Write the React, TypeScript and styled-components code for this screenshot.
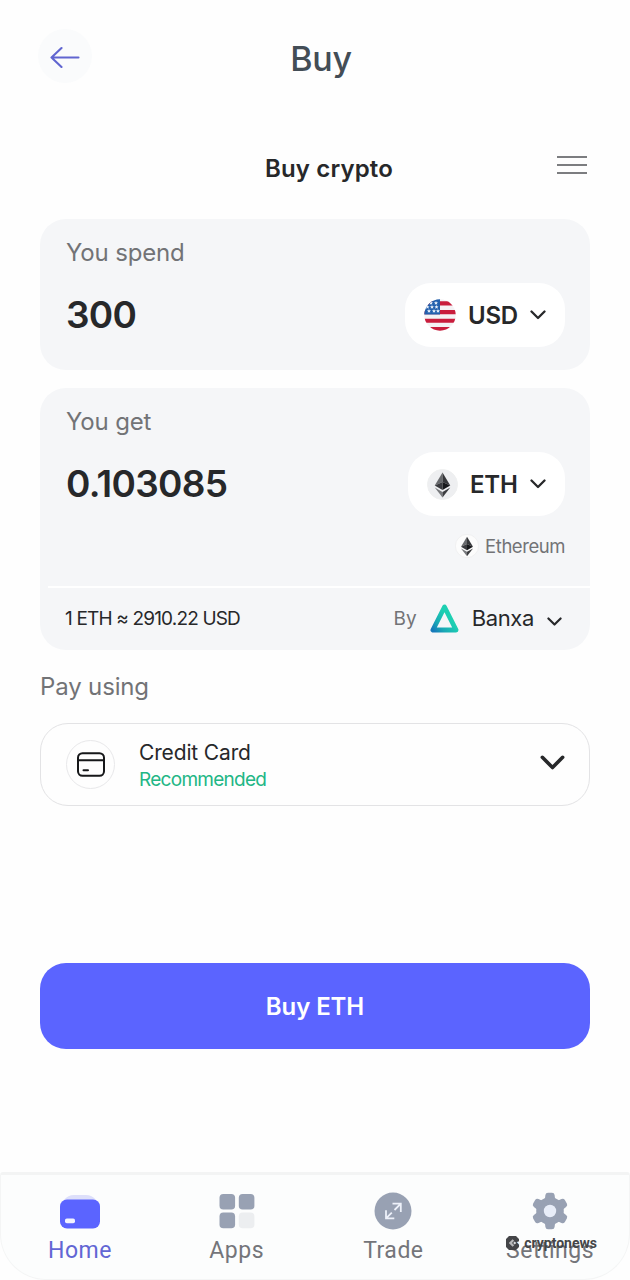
import React from "react";
import styled, { createGlobalStyle } from "styled-components";

const GlobalStyle = createGlobalStyle`
  * { box-sizing: border-box; }
  body { margin: 0; background: #fefefe; }
  button { border: 0; padding: 0; background: none; font: inherit; color: inherit; }
  svg { display: block; flex: none; }
`;

const Screen = styled.div`
  width: 630px;
  height: 1280px;
  overflow: hidden;
  display: flex;
  flex-direction: column;
  background: #fefefe;
  font-family: Inter, "Liberation Sans", sans-serif;
  color: #27282a;
`;

const TopBar = styled.header`
  display: grid;
  grid-template-columns: 54px 1fr 54px;
  align-items: center;
  height: 54px;
  margin: 29px 38px 0;
`;

const BackButton = styled.button`
  display: grid;
  place-items: center;
  width: 54px;
  height: 54px;
  padding-top: 1px;
  border-radius: 50%;
  background: #fafbfc;
`;

const PageTitle = styled.h1`
  margin: 6px 0 0 12px;
  text-align: center;
  font-size: 34px;
  line-height: 42px;
  font-weight: 500;
  letter-spacing: -0.3px;
  color: #434d56;
`;

const SubHeader = styled.div`
  display: grid;
  grid-template-columns: 30px 1fr 30px;
  align-items: center;
  height: 40px;
  margin: 65px 43px 0 70px;
`;

const SubTitle = styled.h2`
  margin: 1px 0 0 1px;
  text-align: center;
  font-size: 24px;
  line-height: 30px;
  font-weight: 600;
  letter-spacing: 0.15px;
`;

const MenuButton = styled.button`
  align-self: start;
  margin-top: 7px;
`;

const Content = styled.main`
  display: flex;
  flex-direction: column;
  padding: 0 40px;
  margin-top: 31px;
`;

const Card = styled.section<{ $height: number }>`
  display: flex;
  flex-direction: column;
  height: ${(p) => p.$height}px;
  border-radius: 26px;
  background: #f5f6f8;
  & + & { margin-top: 18px; }
`;

const Label = styled.div`
  font-size: 24px;
  line-height: 30px;
  letter-spacing: -0.15px;
  color: #727376;
`;

const CardLabel = styled(Label)`
  margin: 19px 26px 0;
`;

const AmountRow = styled.div`
  display: flex;
  align-items: center;
  justify-content: space-between;
  height: 64px;
  margin: 15px 25px 0 26px;
`;

const Amount = styled.div`
  font-size: 37px;
  line-height: 46px;
  font-weight: 600;
  letter-spacing: -0.7px;
`;

const CurrencyButton = styled.button<{ $width: number }>`
  display: flex;
  align-items: center;
  width: ${(p) => p.$width}px;
  height: 64px;
  padding: 0 19px;
  border-radius: 26px;
  background: #fff;
`;

const Code = styled.span`
  flex: 1;
  padding-left: 12px;
  text-align: left;
  font-size: 24px;
  font-weight: 600;
  letter-spacing: -0.2px;
`;

const Network = styled.div`
  display: flex;
  align-items: center;
  justify-content: flex-end;
  gap: 6px;
  height: 26px;
  margin: 17px 25px 0;
  font-size: 18.5px;
  letter-spacing: -0.45px;
  color: #727376;
`;

const QuoteRow = styled.div`
  display: flex;
  align-items: center;
  justify-content: space-between;
  height: 64px;
  margin: 27px 0 0 8px;
  padding: 0 28px 2px 17px;
  border-top: 2px solid #fff;
`;

const Rate = styled.div`
  font-size: 19px;
  letter-spacing: -0.83px;
`;

const Provider = styled.div`
  display: flex;
  align-items: center;
`;

const By = styled.span`
  margin-right: 13px;
  font-size: 19px;
  color: #727376;
`;

const ProviderName = styled.span`
  margin: 0 13px 0 13px;
  font-size: 22px;
  letter-spacing: -0.35px;
`;

const ProviderArrow = styled.span`
  margin-top: 7px;
`;

const PayLabel = styled(Label)`
  margin-top: 22px;
`;

const PayMethod = styled.button`
  display: flex;
  align-items: center;
  height: 83px;
  margin-top: 21px;
  padding: 0 24px 0 25px;
  border: 1.5px solid #e3e3e5;
  border-radius: 28px;
  text-align: left;
`;

const MethodIcon = styled.span`
  display: grid;
  place-items: center;
  width: 49px;
  height: 49px;
  border: 1.5px solid #e8e8ea;
  border-radius: 50%;
`;

const MethodText = styled.span`
  display: flex;
  flex: 1;
  flex-direction: column;
  padding: 3px 0 0 24px;
`;

const MethodName = styled.span`
  font-size: 21px;
  line-height: 27px;
  letter-spacing: -0.15px;
`;

const MethodNote = styled.span`
  font-size: 19px;
  line-height: 27px;
  letter-spacing: -0.72px;
  color: #22b685;
`;

const MethodArrow = styled.span`
  padding-bottom: 4px;
`;

const BuyButton = styled.button`
  height: 86px;
  margin-top: 157px;
  border-radius: 26px;
  background: #5b64ff;
  color: #fff;
  font-size: 24px;
  font-weight: 600;
  letter-spacing: -0.1px;
`;

const TabBar = styled.nav`
  position: relative;
  display: grid;
  grid-template-columns: repeat(4, 156.7px);
  justify-content: center;
  height: 108px;
  margin-top: auto;
  border: 1px solid #f4f5f5;
  border-top: 3px solid #f3f4f4;
  border-radius: 3px 3px 46px 46px;
  background: #fcfdfd;
`;

const Tab = styled.a<{ $active?: boolean }>`
  display: flex;
  flex-direction: column;
  align-items: center;
  padding-top: 17px;
  font-family: Roboto, sans-serif;
  font-size: 23px;
  line-height: 28px;
  letter-spacing: 0.5px;
  color: ${(p) => (p.$active ? "#6266d4" : "#74757a")};
  svg { margin-bottom: 7px; }
`;

const Watermark = styled.div`
  position: absolute;
  right: 32px;
  bottom: 28px;
  display: flex;
  align-items: center;
  gap: 5px;
  font-family: Roboto, sans-serif;
  font-size: 14px;
  line-height: 16px;
  font-weight: 700;
  color: #444548;
`;

function Chevron({ width, stroke }: { width: number; stroke: number }) {
  return (
    <svg width={width} height={width * 0.625} viewBox="0 0 16 10" fill="none" stroke="#27282a"
      strokeWidth={stroke} strokeLinecap="round" strokeLinejoin="round">
      <path d="M1.5 1.5 8 8 14.5 1.5" />
    </svg>
  );
}

function EthCoin({ size, ring, fill }: { size: number; ring: string; fill: string }) {
  return (
    <svg width={size} height={size} viewBox="0 0 32 32">
      <circle cx="16" cy="16" r="15.5" fill={fill} stroke={ring} />
      <path d="M16 3.5 8 17l8-3.7z" fill="#686a6d" />
      <path d="M16 3.5 24 17l-8-3.7z" fill="#36373a" />
      <path d="m8 17 8-3.7v8.4z" fill="#3a3b3f" />
      <path d="m24 17-8-3.7v8.4z" fill="#17181b" />
      <path d="m8 19.2 8 4.5v5.8z" fill="#77797c" />
      <path d="m24 19.2-8 4.5v5.8z" fill="#3c3d40" />
    </svg>
  );
}

function UsFlag() {
  const stars = [[7, 4], [12, 4], [3.5, 8], [8, 8], [12.5, 8], [5, 12], [10, 12], [14, 12]];
  return (
    <svg width="32" height="32" viewBox="0 0 32 32">
      <clipPath id="flag"><circle cx="16" cy="16" r="15.7" /></clipPath>
      <g clipPath="url(#flag)">
        <path d="M0 0h32v32H0z" fill="#f4f2f4" />
        <path d="M0 2.3h32v4.2H0zM0 11h32v4.2H0zM0 19.7h32v4.1H0zM0 28h32v4H0z" fill="#c91d3c" />
        <path d="M0 0h16v15.4H0z" fill="#2360ad" />
        {stars.map(([x, y]) => (
          <path key={`${x}-${y}`} fill="#e5edf8"
            d={`M${x} ${y - 2}l.6 1.3 1.4.2-1.1.9.4 1.4-1.3-.8-1.3.8.4-1.4-1.1-.9 1.4-.2z`} />
        ))}
      </g>
    </svg>
  );
}

function BanxaLogo() {
  return (
    <svg width="29" height="29" viewBox="0 0 29 29">
      <defs>
        <linearGradient id="banxa" x1="0" y1="1" x2="0.65" y2="0.45">
          <stop offset="0" stopColor="#1679ba" />
          <stop offset="0.4" stopColor="#19a8b5" />
          <stop offset="1" stopColor="#1dcfb2" />
        </linearGradient>
      </defs>
      <path d="M14.5 3 2.9 26h23.2z" fill="none" stroke="url(#banxa)" strokeWidth="4.8" strokeLinejoin="round" />
    </svg>
  );
}

function GearIcon() {
  const teeth = [0, 60, 120, 180, 240, 300];
  return (
    <svg width="38" height="38" viewBox="0 0 38 38">
      <g fill="#98a1b3">
        <circle cx="19" cy="19" r="13.8" />
        {teeth.map((angle) => (
          <path key={angle} transform={`rotate(${angle} 19 19)`}
            d="M12.8 8.5q1.1-1.2 1.3-3l.3-2.4Q14.7.7 17 .7h4q2.3 0 2.6 2.4l.3 2.4q.2 1.8 1.3 3z" />
        ))}
      </g>
      <circle cx="19" cy="19" r="6.2" fill="#e8edf8" />
    </svg>
  );
}

export default function App() {
  return (
    <Screen>
      <GlobalStyle />
      <TopBar>
        <BackButton aria-label="Back">
          <svg width="30" height="22" viewBox="0 0 30 22" fill="none" stroke="#6065d0" strokeWidth="2.1"
            strokeLinecap="round" strokeLinejoin="round">
            <path d="M28.5 11.5h-27M11.5 2 1.5 11.5l10 9.5" />
          </svg>
        </BackButton>
        <PageTitle>Buy</PageTitle>
      </TopBar>

      <SubHeader>
        <span />
        <SubTitle>Buy crypto</SubTitle>
        <MenuButton aria-label="Menu">
          <svg width="30" height="20" viewBox="0 0 30 20" stroke="#7c7d80" strokeWidth="2">
            <path d="M0 2h30M0 10h30M0 18h30" />
          </svg>
        </MenuButton>
      </SubHeader>

      <Content>
        <Card $height={151}>
          <CardLabel>You spend</CardLabel>
          <AmountRow>
            <Amount>300</Amount>
            <CurrencyButton $width={160}>
              <UsFlag />
              <Code>USD</Code>
              <Chevron width={16} stroke={2.3} />
            </CurrencyButton>
          </AmountRow>
        </Card>

        <Card $height={262}>
          <CardLabel>You get</CardLabel>
          <AmountRow>
            <Amount>0.103085</Amount>
            <CurrencyButton $width={157}>
              <EthCoin size={31} ring="#eeeff0" fill="#eeeff1" />
              <Code>ETH</Code>
              <Chevron width={16} stroke={2.3} />
            </CurrencyButton>
          </AmountRow>
          <Network>
            <EthCoin size={24} ring="#ececee" fill="#fcfcfc" />
            Ethereum
          </Network>
          <QuoteRow>
            <Rate>1 ETH ≈ 2910.22 USD</Rate>
            <Provider>
              <By>By</By>
              <BanxaLogo />
              <ProviderName>Banxa</ProviderName>
              <ProviderArrow><Chevron width={15} stroke={2.3} /></ProviderArrow>
            </Provider>
          </QuoteRow>
        </Card>

        <PayLabel>Pay using</PayLabel>
        <PayMethod>
          <MethodIcon>
            <svg width="28" height="25" viewBox="0 0 28 25" fill="none" stroke="#161719" strokeWidth="2" strokeLinecap="round">
              <rect x="1" y="1.2" width="26" height="22.6" rx="4.5" />
              <path d="M1 8.2h26M6.5 18.3h4.5" />
            </svg>
          </MethodIcon>
          <MethodText>
            <MethodName>Credit Card</MethodName>
            <MethodNote>Recommended</MethodNote>
          </MethodText>
          <MethodArrow><Chevron width={25} stroke={2.3} /></MethodArrow>
        </PayMethod>

        <BuyButton>Buy ETH</BuyButton>
      </Content>

      <TabBar>
        <Tab $active>
          <svg width="40" height="38" viewBox="0 0 40 38">
            <path d="M4 8q4-5 10-5h12q6 0 10 5z" fill="#dddffa" />
            <rect y="7.5" width="40" height="29" rx="7" fill="#5b64ff" />
            <rect x="5" y="26.5" width="10" height="4.8" rx="1.8" fill="#f2f3ff" />
          </svg>
          Home
        </Tab>
        <Tab>
          <svg width="36" height="38" viewBox="0 0 36 38" fill="#98a1b3">
            <rect x=".5" y="2" width="15.6" height="15.6" rx="3.8" />
            <rect x="19.8" y="2" width="15.6" height="15.6" rx="3.8" />
            <rect x=".5" y="20.6" width="15.6" height="15.6" rx="3.8" />
            <rect x="19.8" y="20.6" width="15.6" height="15.6" rx="3.8" fill="#eceef0" />
          </svg>
          Apps
        </Tab>
        <Tab>
          <svg width="38" height="38" viewBox="0 0 38 38" fill="none" stroke="#edf1fa" strokeWidth="1.8">
            <circle cx="19" cy="19" r="18.5" fill="#98a1b3" stroke="none" />
            <path d="m20.5 18 6.3-6.3M18.5 11.7h8.3V20M17.8 20.6l-5.8 5.8M12 18.2v8.2h8.3" />
          </svg>
          Trade
        </Tab>
        <Tab>
          <GearIcon />
          Settings
        </Tab>
        <Watermark>
          <svg width="13" height="14" viewBox="0 0 13 14">
            <path d="M3 0h7l3 3v2.2l-2.6 1L13 8.7V11l-3 3H3l-3-3V3z" fill="#444548" />
            <path d="m2.8 7 3.8-3.8 1.5 1.5L6 7l2.2 2.2-1.6 1.5z" fill="#b9babc" />
            <path d="m7.2 7 1.5-1.5L10.2 7 8.7 8.5z" fill="#dedfe0" />
          </svg>
          cryptonews
        </Watermark>
      </TabBar>
    </Screen>
  );
}
